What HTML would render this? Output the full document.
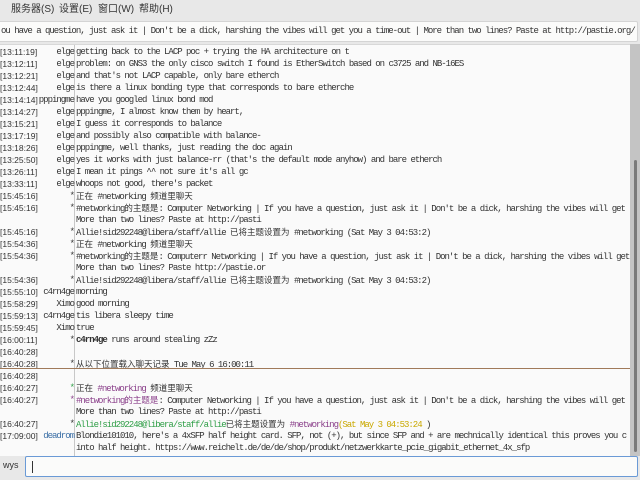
<!DOCTYPE html>
<html><head><meta charset="utf-8"><style>
*{margin:0;padding:0;box-sizing:border-box}
body{width:640px;height:480px;background:#e8e8e8;position:relative;overflow:hidden;font-family:"Liberation Sans","Noto Sans CJK SC",sans-serif;color:#333}
.menu{position:absolute;top:0;left:0;height:20px;width:640px;font-size:10px;line-height:20px}
.menu span{position:absolute;top:0}
.topic{position:absolute;top:21px;left:-2px;width:640px;height:21px;background:#fbfbfa;border:1px solid #d4d4d4;border-radius:2px;font-family:"Liberation Mono","Noto Sans CJK SC",monospace;font-size:9px;letter-spacing:-1px;line-height:19px;white-space:nowrap;overflow:hidden;padding-left:2px}
.chat{position:absolute;top:44px;left:0;width:630px;height:412px;background:#fafafa;overflow:hidden;border-top:1px solid #d8d8d8}
.sep{position:absolute;left:74px;top:0;width:1px;height:412px;background:#c8c8c8}
.r{position:absolute;left:0;width:630px;height:12px;line-height:12px;white-space:nowrap;margin-top:1px}
.t{position:absolute;left:0;font-size:8.5px}
.n{position:absolute;right:556px;font-family:"Liberation Mono",monospace;font-size:9px;letter-spacing:-1px;text-align:right}
.m{position:absolute;left:76px;font-family:"Liberation Mono","Noto Sans CJK SC",monospace;font-size:9px;letter-spacing:-1px}
.cjk{font-family:"Noto Sans CJK SC",sans-serif;letter-spacing:0;font-size:8.5px}
.p{color:#8a3f8a}.g{color:#2e9e46}.y{color:#c9a800}.b{color:#3a6ea5}
.marker{position:absolute;left:0;top:323px;width:630px;height:1px;background:#a07a5a}
.sb{position:absolute;left:630px;top:44px;width:10px;height:412px;background:#c4c4c4}
.th{position:absolute;left:634px;top:160px;width:3px;height:292px;background:#7a7a7a;border-radius:2px}
.input{position:absolute;left:25px;top:456px;width:613px;height:21px;background:#fbfbfa;border:1px solid #6a9ad6;border-radius:2px}
.caret{position:absolute;left:6px;top:4px;width:1px;height:12px;background:#333}
.lbl{position:absolute;left:3px;top:460px;font-size:9px}
</style></head><body>
<div class="menu"><span style="left:11px">服务器(S)</span><span style="left:59px">设置(E)</span><span style="left:98px">窗口(W)</span><span style="left:139px">帮助(H)</span></div>
<div class="topic">ou have a question, just ask it | Don't be a dick, harshing the vibes will get you a time-out | More than two lines? Paste at http://pastie.org/</div>
<div class="chat">
<div class="sep"></div>
<div class="r" style="top:0"><span class="t">[13:11:19]</span><span class="n">elge</span><span class="m">getting back to the LACP poc + trying the HA architecture on t</span></div>
<div class="r" style="top:12px"><span class="t">[13:12:11]</span><span class="n">elge</span><span class="m">problem: on GNS3 the only cisco switch I found is EtherSwitch based on c3725 and NB-16ES</span></div>
<div class="r" style="top:24px"><span class="t">[13:12:21]</span><span class="n">elge</span><span class="m">and that's not LACP capable, only bare etherch</span></div>
<div class="r" style="top:36px"><span class="t">[13:12:44]</span><span class="n">elge</span><span class="m">is there a linux bonding type that corresponds to bare etherche</span></div>
<div class="r" style="top:48px"><span class="t">[13:14:14]</span><span class="n">pppingme</span><span class="m">have you googled linux bond mod</span></div>
<div class="r" style="top:60px"><span class="t">[13:14:27]</span><span class="n">elge</span><span class="m">pppingme, I almost know them by heart,</span></div>
<div class="r" style="top:72px"><span class="t">[13:15:21]</span><span class="n">elge</span><span class="m">I guess it corresponds to balance</span></div>
<div class="r" style="top:84px"><span class="t">[13:17:19]</span><span class="n">elge</span><span class="m">and possibly also compatible with balance-</span></div>
<div class="r" style="top:96px"><span class="t">[13:18:26]</span><span class="n">elge</span><span class="m">pppingme, well thanks, just reading the doc again</span></div>
<div class="r" style="top:108px"><span class="t">[13:25:50]</span><span class="n">elge</span><span class="m">yes it works with just balance-rr (that's the default mode anyhow) and bare etherch</span></div>
<div class="r" style="top:120px"><span class="t">[13:26:11]</span><span class="n">elge</span><span class="m">I mean it pings ^^ not sure it's all gc</span></div>
<div class="r" style="top:132px"><span class="t">[13:33:11]</span><span class="n">elge</span><span class="m">whoops not good, there's packet</span></div>
<div class="r" style="top:144px"><span class="t">[15:45:16]</span><span class="n">*</span><span class="m"> <span class="cjk">正在</span> #networking <span class="cjk">频道里聊天</span></span></div>
<div class="r" style="top:156px"><span class="t">[15:45:16]</span><span class="n">*</span><span class="m"> #networking<span class="cjk">的主题是</span>: Computer Networking | If you have a question, just ask it | Don't be a dick, harshing the vibes will get</span></div>
<div class="r" style="top:168px"><span class="m">More than two lines? Paste at http://pasti</span></div>
<div class="r" style="top:180px"><span class="t">[15:45:16]</span><span class="n">*</span><span class="m"> Allie!sid292248@libera/staff/allie <span class="cjk">已将主题设置为</span> #networking (Sat May  3 04:53:2)</span></div>
<div class="r" style="top:192px"><span class="t">[15:54:36]</span><span class="n">*</span><span class="m"> <span class="cjk">正在</span> #networking <span class="cjk">频道里聊天</span></span></div>
<div class="r" style="top:204px"><span class="t">[15:54:36]</span><span class="n">*</span><span class="m"> #networking<span class="cjk">的主题是</span>: Computerr Networking | If you have a question, just ask it | Don't be a dick, harshing the vibes will get</span></div>
<div class="r" style="top:216px"><span class="m">More than two lines? Paste http://pastie.or</span></div>
<div class="r" style="top:228px"><span class="t">[15:54:36]</span><span class="n">*</span><span class="m"> Allie!sid292248@libera/staff/allie <span class="cjk">已将主题设置为</span> #networking (Sat May  3 04:53:2)</span></div>
<div class="r" style="top:240px"><span class="t">[15:55:10]</span><span class="n">c4rn4ge</span><span class="m">morning</span></div>
<div class="r" style="top:252px"><span class="t">[15:58:29]</span><span class="n">Ximo</span><span class="m">good morning</span></div>
<div class="r" style="top:264px"><span class="t">[15:59:13]</span><span class="n">c4rn4ge</span><span class="m">tis libera sleepy time</span></div>
<div class="r" style="top:276px"><span class="t">[15:59:45]</span><span class="n">Ximo</span><span class="m">true</span></div>
<div class="r" style="top:288px"><span class="t">[16:00:11]</span><span class="n">*</span><span class="m"><b>c4rn4ge</b> runs around stealing zZz</span></div>
<div class="r" style="top:300px"><span class="t">[16:40:28]</span></div>
<div class="r" style="top:312px"><span class="t">[16:40:28]</span><span class="n">*</span><span class="m"><span class="cjk">从以下位置载入聊天记录</span> Tue May  6 16:00:11</span></div>
<div class="marker"></div>
<div class="r" style="top:324px"><span class="t">[16:40:28]</span></div>
<div class="r" style="top:336px"><span class="t">[16:40:27]</span><span class="n g">*</span><span class="m"> <span class="cjk">正在</span> <span class="p">#networking</span> <span class="cjk">频道里聊天</span></span></div>
<div class="r" style="top:348px"><span class="t">[16:40:27]</span><span class="n p">*</span><span class="m"> <span class="p">#networking<span class="cjk">的主题是</span></span>: Computer Networking | If you have a question, just ask it | Don't be a dick, harshing the vibes will get</span></div>
<div class="r" style="top:360px"><span class="m">More than two lines? Paste at http://pasti</span></div>
<div class="r" style="top:372px"><span class="t">[16:40:27]</span><span class="n">*</span><span class="m"> <span class="g">Allie!sid292248@libera/staff/allie</span><span class="cjk">已将主题设置为</span> <span class="p">#networking</span><span class="y">(Sat May  3 04:53:24 </span>)</span></div>
<div class="r" style="top:384px"><span class="t">[17:09:00]</span><span class="n b">deadrom</span><span class="m">Blondie101010, here's a 4xSFP half height card. SFP, not (+), but since SFP and + are mechnically identical this proves you c</span></div>
<div class="r" style="top:396px"><span class="m">into half height.  https://www.reichelt.de/de/de/shop/produkt/netzwerkkarte_pcie_gigabit_ethernet_4x_sfp</span></div>
</div>
<div class="sb"></div><div class="th"></div>
<div class="lbl">wys</div>
<div class="input"><div class="caret"></div></div>
</body></html>
